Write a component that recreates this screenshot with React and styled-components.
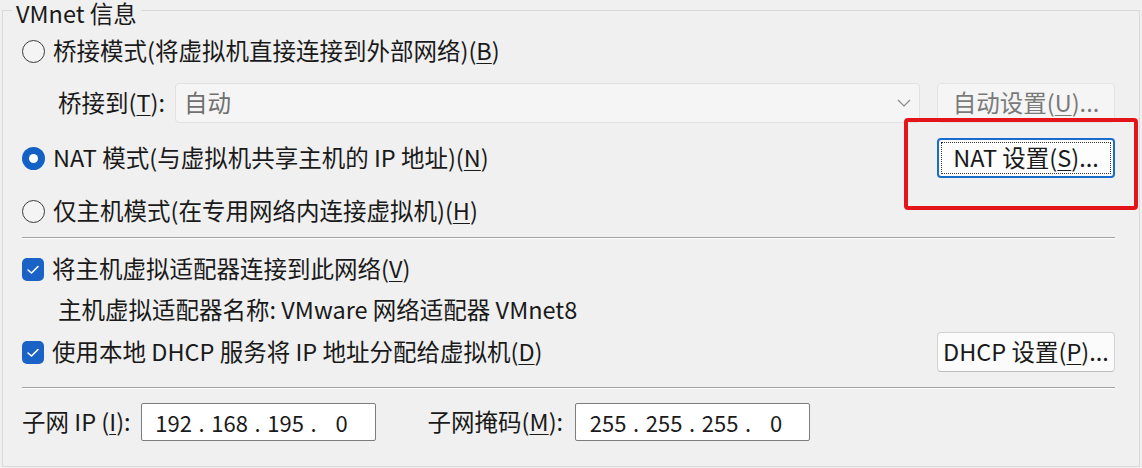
import React from "react";
import styled, { createGlobalStyle, css } from "styled-components";

const GlobalStyle = createGlobalStyle`
  html, body {
    margin: 0;
    padding: 0;
    background: #f0f0f0;
  }
  body {
    font-family: "Noto Sans CJK SC", "Noto Sans", sans-serif;
    font-size: 23.5px;
    color: #1a1a1a;
  }
  #root {
    height: 468px;
    overflow: hidden;
  }
`;

const Group = styled.fieldset`
  margin: -4px 2px 0;
  padding: 0 24px 0 19px;
  border: 1px solid #d9d9d9;
  height: 471px;
  box-sizing: border-box;
  min-width: 0;
  display: flex;
  flex-direction: column;
`;

const Legend = styled.legend`
  margin-left: -10px;
  padding: 6px 4px 0;
  line-height: 22px;
  color: #1a1a1a;
`;

const Row = styled.div`
  display: flex;
  align-items: center;
  height: 40px;
  flex-shrink: 0;
  margin-top: ${(p) => p.$mt || 0}px;
  padding-left: ${(p) => p.$indent || 0}px;
`;

const Text = styled.span`
  white-space: pre;
  line-height: 1;
  margin-left: ${(p) => p.$gap || 0}px;
  color: ${(p) => (p.$muted ? "#707070" : "#1a1a1a")};
`;

const Key = styled.u`
  text-decoration-thickness: 1px;
  text-underline-offset: 3px;
`;

const RadioDot = styled.span`
  width: 23px;
  height: 23px;
  box-sizing: border-box;
  border-radius: 50%;
  flex-shrink: 0;
  margin-right: 8px;
  display: flex;
  align-items: center;
  justify-content: center;
  ${(p) =>
    p.$on
      ? css`
          background: #1461c5;
          &::after {
            content: "";
            width: 9px;
            height: 9px;
            border-radius: 50%;
            background: #fff;
          }
        `
      : css`
          border: 1.5px solid #3c3c3c;
          background: #f4f4f4;
        `}
`;

const CheckBox = styled.span`
  width: 22px;
  height: 23px;
  border-radius: 5px;
  background: #1a62c6;
  flex-shrink: 0;
  margin-right: 8px;
  display: flex;
  align-items: center;
  justify-content: center;
`;

const Combo = styled.div`
  flex: 1;
  height: 40px;
  box-sizing: border-box;
  margin-left: 10px;
  padding: 0 8px 0 8px;
  border: 1px solid #e1e1e1;
  border-radius: 4px;
  background: #f5f5f5;
  display: flex;
  align-items: center;
  justify-content: space-between;
`;

const Button = styled.div`
  position: relative;
  width: 178px;
  height: 40px;
  box-sizing: border-box;
  margin-left: ${(p) => (p.$gap !== undefined ? `${p.$gap}px` : "auto")};
  border-radius: 4px;
  display: flex;
  align-items: center;
  justify-content: center;
  white-space: pre;
  line-height: 1;
  flex-shrink: 0;
  ${(p) =>
    p.$kind === "disabled" &&
    css`
      background: #f5f5f5;
      border: 1px solid #e3e3e3;
      color: #7a7a7a;
    `}
  ${(p) =>
    p.$kind === "focus" &&
    css`
      background: #fdfdfd;
      border: 2px solid #1a6ccc;
      color: #1a1a1a;
      &::after {
        content: "";
        position: absolute;
        inset: 2px;
        border: 1px dotted #333;
      }
    `}
  ${(p) =>
    !p.$kind &&
    css`
      background: #fbfbfb;
      border: 1px solid #d3d3d3;
      border-bottom-color: #bdbdbd;
      color: #1a1a1a;
    `}
`;

const ButtonSlot = styled.div`
  position: relative;
  margin-left: auto;
  display: flex;
`;

/* red annotation frame drawn over the NAT settings button */
const Highlight = styled.div`
  position: absolute;
  left: -33px;
  right: -23px;
  top: -20px;
  bottom: -32px;
  border: 4px solid #e5141b;
  border-radius: 4px;
  pointer-events: none;
`;

const Separator = styled.div`
  flex-shrink: 0;
  height: 0;
  border-top: 1px solid #a3a3a3;
  border-bottom: 1px solid #ffffff;
  margin-top: ${(p) => p.$mt}px;
`;

const IpField = styled.div`
  width: 235px;
  height: 38px;
  box-sizing: border-box;
  margin-left: ${(p) => p.$gap}px;
  padding-left: 11px;
  border: 1px solid #7d7d7d;
  border-radius: 2px;
  background: #fff;
  display: flex;
  align-items: center;
  line-height: 1;
  font-size: 22px;
`;

const Octet = styled.span`
  width: 42px;
  text-align: center;
`;

const Dot = styled.span`
  width: 14px;
  text-align: center;
`;

const Chevron = () => (
  <svg width="14" height="8" viewBox="0 0 14 8">
    <polyline points="1,1 7,7 13,1" fill="none" stroke="#8a8a8a" strokeWidth="1.2" />
  </svg>
);

const Check = () => (
  <svg width="14" height="11" viewBox="0 0 14 11">
    <polyline
      points="2,6 5.5,9 12,2.5"
      fill="none"
      stroke="#fff"
      strokeWidth="1.6"
      strokeLinecap="round"
      strokeLinejoin="round"
    />
  </svg>
);

function Radio({ on, children }) {
  return (
    <>
      <RadioDot $on={on} />
      <Text>{children}</Text>
    </>
  );
}

function Checked({ children }) {
  return (
    <>
      <CheckBox>
        <Check />
      </CheckBox>
      <Text>{children}</Text>
    </>
  );
}

function IpAddress({ value, gap }) {
  const parts = value.split(".");
  return (
    <IpField $gap={gap}>
      {parts.map((p, i) => (
        <React.Fragment key={i}>
          {i > 0 && <Dot>.</Dot>}
          <Octet>{p}</Octet>
        </React.Fragment>
      ))}
    </IpField>
  );
}

export default function App() {
  return (
    <>
      <GlobalStyle />
      <Group>
        <Legend>VMnet 信息</Legend>

        <Row $mt={7}>
          <Radio>
            桥接模式(将虚拟机直接连接到外部网络)(<Key>B</Key>)
          </Radio>
        </Row>

        <Row $mt={12} $indent={36}>
          <Text>
            桥接到(<Key>T</Key>):
          </Text>
          <Combo>
            <Text $muted>自动</Text>
            <Chevron />
          </Combo>
          <Button $kind="disabled" $gap={17}>
            自动设置(<Key>U</Key>)...
          </Button>
        </Row>

        <Row $mt={15}>
          <Radio on>
            NAT 模式(与虚拟机共享主机的 IP 地址)(<Key>N</Key>)
          </Radio>
          <ButtonSlot>
            <Button $kind="focus" $gap={0}>
              NAT 设置(<Key>S</Key>)...
            </Button>
            <Highlight />
          </ButtonSlot>
        </Row>

        <Row $mt={13}>
          <Radio>
            仅主机模式(在专用网络内连接虚拟机)(<Key>H</Key>)
          </Radio>
        </Row>

        <Separator $mt={6} />

        <Row $mt={10}>
          <Checked>
            将主机虚拟适配器连接到此网络(<Key>V</Key>)
          </Checked>
        </Row>

        <Row $mt={1} $indent={36}>
          <Text>主机虚拟适配器名称: VMware 网络适配器 VMnet8</Text>
        </Row>

        <Row $mt={2}>
          <Checked>
            使用本地 DHCP 服务将 IP 地址分配给虚拟机(<Key>D</Key>)
          </Checked>
          <Button>
            DHCP 设置(<Key>P</Key>)...
          </Button>
        </Row>

        <Separator $mt={15} />

        <Row $mt={13}>
          <Text>
            子网 IP (<Key>I</Key>):
          </Text>
          <IpAddress value="192.168.195.0" gap={10} />
          <Text $gap={52}>
            子网掩码(<Key>M</Key>):
          </Text>
          <IpAddress value="255.255.255.0" gap={12} />
        </Row>
      </Group>
    </>
  );
}
